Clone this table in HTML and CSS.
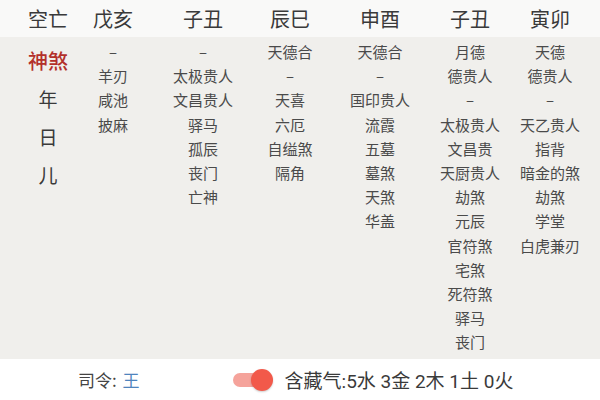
FILE: index.html
```html
<!DOCTYPE html>
<html lang="zh">
<head>
<meta charset="utf-8">
<link rel="stylesheet" href="styles.css">
</head>
<body>
<div class="page">
  <div class="grid head">
    <div class="cell">空亡</div>
    <div class="cell">戊亥</div>
    <div class="cell">子丑</div>
    <div class="cell">辰巳</div>
    <div class="cell">申酉</div>
    <div class="cell">子丑</div>
    <div class="cell">寅卯</div>
  </div>
  <div class="grid body">
    <div class="labels">
      <div class="label red">神煞</div>
      <div class="label">年</div>
      <div class="label">日</div>
      <div class="label">儿</div>
    </div>
    <div class="list">
      <div>–</div><div>羊刃</div><div>咸池</div><div>披麻</div>
    </div>
    <div class="list">
      <div>–</div><div>太极贵人</div><div>文昌贵人</div><div>驿马</div><div>孤辰</div><div>丧门</div><div>亡神</div>
    </div>
    <div class="list">
      <div>天德合</div><div>–</div><div>天喜</div><div>六厄</div><div>自缢煞</div><div>隔角</div>
    </div>
    <div class="list">
      <div>天德合</div><div>–</div><div>国印贵人</div><div>流霞</div><div>五墓</div><div>墓煞</div><div>天煞</div><div>华盖</div>
    </div>
    <div class="list">
      <div>月德</div><div>德贵人</div><div>–</div><div>太极贵人</div><div>文昌贵</div><div>天厨贵人</div><div>劫煞</div><div>元辰</div><div>官符煞</div><div>宅煞</div><div>死符煞</div><div>驿马</div><div>丧门</div>
    </div>
    <div class="list">
      <div>天德</div><div>德贵人</div><div>–</div><div>天乙贵人</div><div>指背</div><div>暗金的煞</div><div>劫煞</div><div>学堂</div><div>白虎兼刃</div>
    </div>
  </div>
  <div class="foot">
    <div class="siling">司令: <span class="blue">王</span></div>
    <div class="toggle"><span class="track"></span><span class="knob"></span></div>
    <div class="qi">含藏气:5水 3金 2木 1土 0火</div>
  </div>
</div>
</body>
</html>
```

FILE: styles.css
```css
html, body {
  margin: 0;
  padding: 0;
}
body {
  width: 600px;
  height: 400px;
  overflow: hidden;
  background: #ffffff;
  font-family: "Noto Sans CJK SC", "Noto Sans", sans-serif;
  color: #333;
}
.page {
  display: flex;
  flex-direction: column;
  height: 400px;
}
.grid {
  display: grid;
  grid-template-columns: 64px 66px 114px 60px 120px 60px 100px;
  padding-left: 16px;
}
.head {
  height: 37px;
  background: #f9f9f8;
  align-items: center;
}
.head .cell {
  text-align: center;
  font-size: 20px;
  color: #3a3a3a;
  line-height: 37px;
}
.body {
  height: 322px;
  background: #f0efec;
  padding-top: 3px;
  box-sizing: border-box;
  align-items: start;
}
.labels {
  display: flex;
  flex-direction: column;
  align-items: center;
  padding-top: 2px;
}
.label {
  font-size: 19px;
  line-height: 38px;
  color: #3a3a3a;
}
.label.red {
  color: #b3302a;
  font-size: 20px;
  font-weight: 500;
}
.list {
  display: flex;
  flex-direction: column;
  align-items: center;
  font-size: 15px;
  line-height: 24.2px;
  color: #4a4a4a;
  white-space: nowrap;
}
.foot {
  flex: 1;
  background: #ffffff;
  display: flex;
  align-items: center;
  padding-left: 78px;
}
.siling {
  font-size: 17px;
  color: #444;
}
.blue {
  color: #4f84bd;
  margin-left: 2px;
}
.toggle {
  position: relative;
  width: 40px;
  height: 24px;
  margin-left: 93px;
}
.track {
  position: absolute;
  left: 0;
  top: 5px;
  width: 34px;
  height: 14px;
  border-radius: 7px;
  background: #f5a39b;
}
.knob {
  position: absolute;
  left: 18px;
  top: 1px;
  width: 22px;
  height: 22px;
  border-radius: 50%;
  background: #f2594a;
  box-shadow: 0 1px 2px rgba(0,0,0,0.2);
}
.qi {
  margin-left: 12px;
  font-family: Roboto, "Noto Sans CJK SC", sans-serif;
  font-size: 19px;
  color: #3a3a3a;
}
```
